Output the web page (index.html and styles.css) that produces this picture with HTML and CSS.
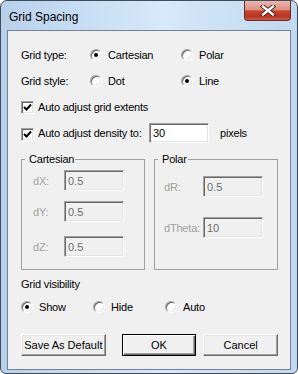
FILE: index.html
```html
<!DOCTYPE html>
<html lang="en">
<head>
    <meta charset="UTF-8">
    <title>Grid Spacing</title>
    <link rel="stylesheet" href="styles.css">
</head>
<body>
<div class="window">
    <div class="titlebar">
        <span class="title">Grid Spacing</span>
        <div class="close_btn">
            <svg width="18" height="11" viewBox="0 0 18 11">
                <path d="M4 1.5 L14 9.5 M14 1.5 L4 9.5" stroke="#4a1810" stroke-width="4.2" stroke-linecap="square"/>
                <path d="M4 1.5 L14 9.5 M14 1.5 L4 9.5" stroke="#fff" stroke-width="2.4" stroke-linecap="square"/>
            </svg>
        </div>
    </div>
    <div class="client">
        <div class="row">
            <span class="lbl">Grid type:</span>
            <label class="opt w91"><span class="radio on"></span>Cartesian</label>
            <label class="opt"><span class="radio"></span>Polar</label>
        </div>
        <div class="row mt10">
            <span class="lbl">Grid style:</span>
            <label class="opt w91"><span class="radio"></span>Dot</label>
            <label class="opt"><span class="radio on"></span>Line</label>
        </div>
        <div class="row mt10">
            <label class="opt"><span class="check"><svg width="9" height="9" viewBox="0 0 9 9"><polyline points="1,4 3.5,6.5 8,1.5" fill="none" stroke="#000" stroke-width="2"/></svg></span>Auto adjust grid extents</label>
        </div>
        <div class="row tall mt8">
            <label class="opt w128"><span class="check"><svg width="9" height="9" viewBox="0 0 9 9"><polyline points="1,4 3.5,6.5 8,1.5" fill="none" stroke="#000" stroke-width="2"/></svg></span>Auto adjust density to:</label>
            <input class="field" type="text" value="30">
            <span class="unit">pixels</span>
        </div>
        <div class="groups">
            <fieldset class="group">
                <legend>Cartesian</legend>
                <div class="gbody cart">
                    <div class="frow"><span class="flbl">dX:</span><input class="field dis" type="text" value="0.5" disabled></div>
                    <div class="frow mt10"><span class="flbl">dY:</span><input class="field dis" type="text" value="0.5" disabled></div>
                    <div class="frow mt14"><span class="flbl">dZ:</span><input class="field dis" type="text" value="0.5" disabled></div>
                </div>
            </fieldset>
            <fieldset class="group">
                <legend>Polar</legend>
                <div class="gbody polar">
                    <div class="frow"><span class="flbl">dR:</span><input class="field dis" type="text" value="0.5" disabled></div>
                    <div class="frow mt20"><span class="flbl">dTheta:</span><input class="field dis" type="text" value="10" disabled></div>
                </div>
            </fieldset>
        </div>
        <div class="row vis_title">Grid visibility</div>
        <div class="row vis">
            <label class="opt w72"><span class="radio on"></span>Show</label>
            <label class="opt w72"><span class="radio"></span>Hide</label>
            <label class="opt"><span class="radio"></span>Auto</label>
        </div>
        <div class="buttons">
            <button class="btn save">Save As Default</button>
            <button class="btn ok">OK</button>
            <button class="btn cancel">Cancel</button>
        </div>
    </div>
</div>
</body>
</html>
```

FILE: styles.css
```css
* {
    box-sizing: border-box;
}
body {
    margin: 0;
    background: #fff;
    font-family: "Liberation Sans", Arial, sans-serif;
    font-size: 11px;
    letter-spacing: -0.2px;
    color: #000;
}
.window {
    width: 298px;
    height: 374px;
    border: 1px solid #3f4c5a;
    border-radius: 7px 7px 6px 6px;
    background: linear-gradient(to right, #b8d1eb 0%, #cfe3f7 40%, #d7e9fa 55%, #c0d8f0 100%);
    padding: 0 6px 3px 6px;
    display: flex;
    flex-direction: column;
}
.titlebar {
    height: 29px;
    display: flex;
    justify-content: space-between;
    align-items: flex-start;
}
.title {
    font-size: 12px;
    letter-spacing: 0;
    line-height: 14px;
    margin: 9px 0 0 2px;
}
.close_btn {
    width: 47px;
    height: 20px;
    border: 1px solid #6b2a22;
    border-top: 0;
    border-radius: 0 0 4px 4px;
    background: linear-gradient(#e9b7ae 0%, #dc9184 45%, #c84632 52%, #b9341f 80%, #cc5a45 100%);
    display: flex;
    align-items: center;
    justify-content: center;
}
.client {
    height: 340px;
    border: 1px solid #6f8297;
    background: #f0f0f0;
    padding: 16px 12px 0 13px;
}
.row {
    display: flex;
    align-items: center;
    height: 16px;
}
.row.tall {
    height: 20px;
}
.mt8 { margin-top: 8px; }
.mt10 { margin-top: 10px; }
.mt14 { margin-top: 14px; }
.mt20 { margin-top: 20px; }
.lbl {
    width: 69px;
}
.opt {
    display: flex;
    align-items: center;
}
.w91 { width: 91px; }
.w72 { width: 72px; }
.w128 { width: 128px; }
.radio {
    position: relative;
    width: 12px;
    height: 12px;
    margin-right: 6px;
    border-radius: 50%;
    background: #fff;
    border: 1px solid;
    border-color: #a0a0a0 #fff #fff #a0a0a0;
    box-shadow: inset 1px 1px 0 #696969, inset -1px -1px 0 #e3e3e3;
}
.radio.on::after {
    content: "";
    position: absolute;
    left: 3px;
    top: 3px;
    width: 4px;
    height: 4px;
    border-radius: 50%;
    background: #000;
}
.check {
    width: 13px;
    height: 13px;
    margin-right: 4px;
    background: #fff;
    border: 1px solid;
    border-color: #a0a0a0 #fff #fff #a0a0a0;
    box-shadow: inset 1px 1px 0 #696969, inset -1px -1px 0 #e3e3e3;
    display: flex;
    align-items: center;
    justify-content: center;
}
.row.tall .check {
    margin-top: 3px;
}
.field {
    width: 60px;
    height: 20px;
    margin: 0;
    padding: 0 3px;
    font: inherit;
    letter-spacing: 0;
    color: #000;
    background: #fff;
    border: 1px solid;
    border-color: #a0a0a0 #fff #fff #a0a0a0;
    box-shadow: inset 1px 1px 0 #696969, inset -1px -1px 0 #e3e3e3;
    outline: none;
}
.field.dis {
    height: 21px;
    background: #f0f0f0;
    color: #6d6d6d;
}
.unit {
    margin-left: 11px;
}
.groups {
    display: flex;
    gap: 9px;
    margin-top: 10px;
}
.group {
    width: 124px;
    height: 117px;
    margin: 0;
    padding: 0;
    border: 1px solid #a0a0a0;
}
.group legend {
    margin-left: 3px;
    padding: 0 1px 0 4px;
    line-height: 13px;
}
.gbody.cart {
    padding: 4px 0 0 11px;
}
.gbody.polar {
    padding: 10px 0 0 9px;
}
.frow {
    display: flex;
    align-items: center;
    height: 21px;
}
.flbl {
    color: #a0a0a0;
}
.cart .flbl { width: 31px; }
.polar .flbl { width: 39px; }
.vis_title {
    margin-top: 6px;
}
.vis {
    margin-top: 7px;
}
.buttons {
    display: flex;
    margin-top: 19px;
}
.btn {
    height: 22px;
    width: 75px;
    padding: 0;
    font: inherit;
    color: #000;
    background: #f0f0f0;
    border: 1px solid;
    border-color: #fff #696969 #696969 #fff;
    box-shadow: inset -1px -1px 0 #a0a0a0, inset 1px 1px 0 #e3e3e3;
}
.btn.save {
    width: 85px;
}
.btn.ok {
    margin-left: 16px;
    border-color: #000;
    box-shadow: inset 1px 1px 0 #fff, inset -1px -1px 0 #696969, inset -2px -2px 0 #a0a0a0;
}
.btn.cancel {
    margin-left: 7px;
}
```
